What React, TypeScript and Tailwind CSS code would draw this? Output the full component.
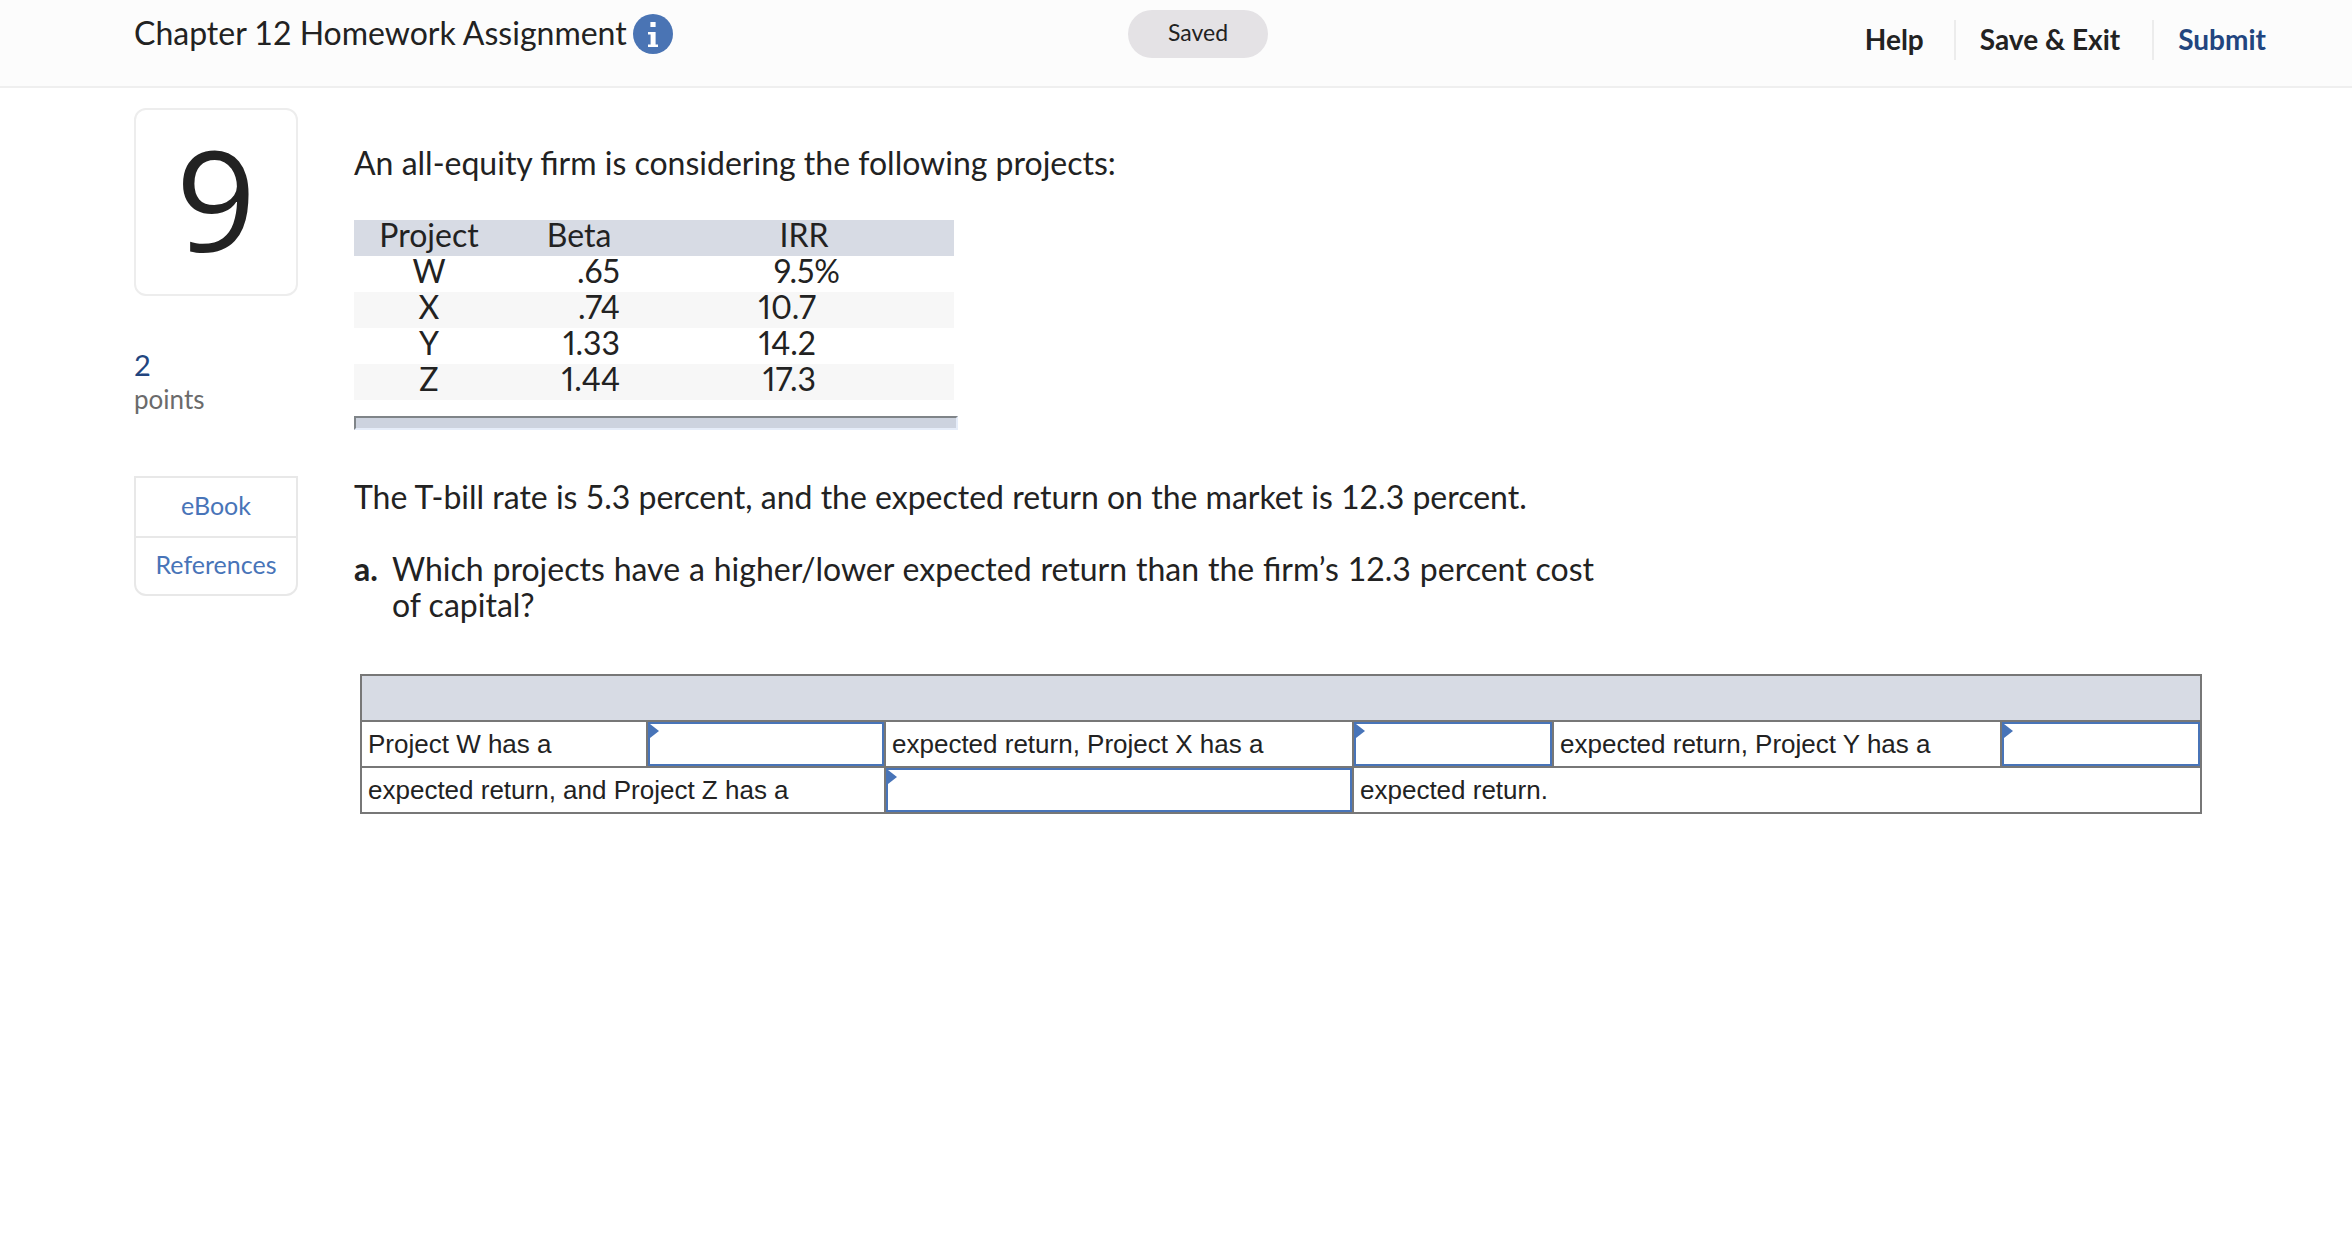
import { useState } from "react";

const projects = [
  { name: "W", beta: ".65", irr: "9.5%", percent: true },
  { name: "X", beta: ".74", irr: "10.7", percent: false },
  { name: "Y", beta: "1.33", irr: "14.2", percent: false },
  { name: "Z", beta: "1.44", irr: "17.3", percent: false },
];

function InfoIcon() {
  return (
    <svg viewBox="0 0 40 40" className="size-10" aria-hidden="true">
      <circle cx="20" cy="20" r="20" fill="#4a74b4" />
      <path d="M17.4 8h5.2v5h-5.2zM15 18h7.6v12.4H25V33H15v-2.6h2.6v-9.8H15z" fill="#fff" />
    </svg>
  );
}

function Header() {
  return (
    <header className="grid h-[88px] grid-cols-[1fr_auto_1fr] items-start border-b-2 border-[#efefef] bg-[#fcfcfc] pr-[86px] pl-[130px]">
      <div className="flex items-center gap-1.5 pt-[14px] pl-1">
        <h1 className="pb-0.5 text-[32px] leading-9">Chapter 12 Homework Assignment</h1>
        <button type="button" aria-label="Assignment information">
          <InfoIcon />
        </button>
      </div>
      <div className="mt-[10px] flex h-12 w-[140px] items-center justify-center rounded-full bg-[#e4e2e5] pb-1 text-[23px]">
        Saved
      </div>
      <nav className="mt-5 flex h-10 items-center justify-end text-[28px] leading-[38px] font-bold">
        <button type="button" className="pr-[30px] pb-0.5">Help</button>
        <button type="button" className="border-l-2 border-[#ececec] pr-8 pb-0.5 pl-6">Save &amp; Exit</button>
        <button type="button" className="border-l-2 border-[#ececec] pb-0.5 pl-6">
          <span className="text-[#22457f]">Submit</span>
        </button>
      </nav>
    </header>
  );
}

function Sidebar() {
  return (
    <aside className="w-[164px] shrink-0">
      <div className="flex h-[188px] items-center justify-center rounded-xl border-2 border-[#ededed] pb-2 font-['Open_Sans',sans-serif] text-[140px] leading-none font-medium">
        9
      </div>
      <div className="mt-[50px]">
        <p className="text-[29px] leading-[38px] text-[#22457f]">2</p>
        <p className="text-[26px] leading-[30px] text-[#6b6b6b]">points</p>
      </div>
      <div className="mt-[62px] flex flex-col rounded-b-xl border-2 border-[#e8e8e8] text-center text-[25px] text-[#4874b8]">
        <a href="#ebook" className="border-b-2 border-[#e8e8e8] pb-1 leading-[54px]">eBook</a>
        <a href="#references" className="pb-1 leading-[52px]">References</a>
      </div>
    </aside>
  );
}

function ProjectTable() {
  return (
    <table className="w-[600px] table-fixed border-collapse leading-[30px] proportional-nums">
      <colgroup>
        <col className="w-[150px]" />
        <col className="w-[150px]" />
        <col />
      </colgroup>
      <thead>
        <tr className="bg-[#d7dbe4]">
          <th className="p-0 pb-1.5 text-center font-normal">Project</th>
          <th className="p-0 pb-1.5 text-center font-normal">Beta</th>
          <th className="p-0 pb-1.5 text-center font-normal">IRR</th>
        </tr>
      </thead>
      <tbody>
        {projects.map((p) => (
          <tr key={p.name} className="even:bg-[#f7f7f7]">
            <td className="p-0 pb-1.5 text-center">{p.name}</td>
            <td className="p-0 pr-[34px] pb-1.5 text-right">{p.beta}</td>
            <td className={p.percent ? "p-0 pr-[114px] pb-1.5 text-right" : "p-0 pr-[138px] pb-1.5 text-right"}>{p.irr}</td>
          </tr>
        ))}
      </tbody>
    </table>
  );
}

function AnswerCell({ project, span }: { project: string; span?: number }) {
  const [value, setValue] = useState("");
  return (
    <td colSpan={span} className="relative border-2 border-[#777] p-0">
      <select
        aria-label={"Expected return of project " + project}
        value={value}
        onChange={(e) => setValue(e.target.value)}
        className="block h-11 w-full appearance-none border-2 border-[#4874b8] bg-white px-4 outline-none"
      >
        <option value=""></option>
        <option value="higher">higher</option>
        <option value="lower">lower</option>
      </select>
      <svg viewBox="0 0 9 14" className="pointer-events-none absolute top-0.5 left-0.5 h-[14px] w-[9px]" aria-hidden="true">
        <path d="M0 0L9 7L0 14z" fill="#4874b8" />
      </svg>
    </td>
  );
}

function TextCell({ children, span }: { children: string; span?: number }) {
  return (
    <td colSpan={span} className="border-2 border-[#777] px-1.5 py-0 whitespace-nowrap">
      {children}
    </td>
  );
}

function AnswerTable() {
  return (
    <table className="w-full table-fixed border-collapse font-['Liberation_Sans',Arial,sans-serif] text-[26px] leading-[44px]">
      <colgroup>
        <col className="w-[286px]" />
        <col className="w-[238px]" />
        <col className="w-[468px]" />
        <col className="w-[200px]" />
        <col className="w-[448px]" />
        <col />
      </colgroup>
      <tbody>
        <tr>
          <td colSpan={6} className="h-[46px] border-2 border-[#777] bg-[#d7dbe4] p-0"></td>
        </tr>
        <tr>
          <TextCell>Project W has a</TextCell>
          <AnswerCell project="W" />
          <TextCell>expected return, Project X has a</TextCell>
          <AnswerCell project="X" />
          <TextCell>expected return, Project Y has a</TextCell>
          <AnswerCell project="Y" />
        </tr>
        <tr>
          <TextCell span={2}>expected return, and Project Z has a</TextCell>
          <AnswerCell project="Z" />
          <TextCell span={3}>expected return.</TextCell>
        </tr>
      </tbody>
    </table>
  );
}

export default function App() {
  return (
    <div className="min-h-screen bg-white font-[Lato,sans-serif] text-[#222]">
      <Header />
      <div className="flex gap-14 pt-5 pr-[150px] pb-10 pl-[134px]">
        <Sidebar />
        <main className="min-w-0 flex-1 pt-[37px] text-[32px] leading-9">
          <p>An all-equity firm is considering the following projects:</p>
          <div className="mt-[39px]">
            <ProjectTable />
          </div>
          <div className="mt-4 h-[14px] w-[604px] border-2 border-t-[#7f8488] border-r-[#e6edf9] border-b-[#e6edf9] border-l-[#7f8488] bg-[#cdd3df]" />
          <p className="mt-[49px]">
            The T-bill rate is 5.3 percent, and the expected return on the market is 12.3 percent.
          </p>
          <div className="mt-9 flex max-w-[1240px]">
            <span className="w-[38px] shrink-0 font-bold">a.</span>
            <p className="flex-1 text-justify">
              Which projects have a higher/lower expected return than the firm’s 12.3 percent cost of capital?
            </p>
          </div>
          <div className="mt-[51px] pl-1.5">
            <AnswerTable />
          </div>
        </main>
      </div>
    </div>
  );
}
